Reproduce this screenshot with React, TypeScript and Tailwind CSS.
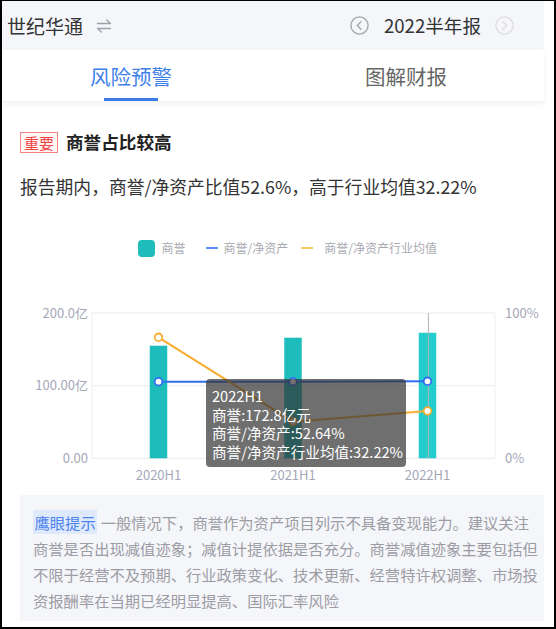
import React from "react";

const F = "font-['Noto_Sans_CJK_SC','Noto_Sans',sans-serif]";

function SwapIcon() {
  return (
    <svg width="16" height="16" viewBox="0 0 16 16" fill="none" stroke="#a0a0a8" strokeWidth="1.3" strokeLinecap="round" strokeLinejoin="round">
      <path d="M1.5 5.5 H14.5 L10.5 2" />
      <path d="M14.5 10.5 H1.5 L5.5 14" />
    </svg>
  );
}

function CircleChevron({ dir, color }: { dir: "left" | "right"; color: string }) {
  return (
    <svg width="19" height="19" viewBox="0 0 19 19" fill="none" stroke={color} strokeWidth="1.3" strokeLinecap="round" strokeLinejoin="round">
      <circle cx="9.5" cy="9.5" r="8.6" />
      {dir === "left" ? <path d="M11 5.8 L7.3 9.5 L11 13.2" /> : <path d="M8 5.8 L11.7 9.5 L8 13.2" />}
    </svg>
  );
}

function Chart() {
  const y0 = 168.3;
  const yTop = 23;
  const h = y0 - yTop;
  const bars = [
    { x: 156.5, v: 155, c: "#1fbcbc" },
    { x: 291, v: 166, c: "#1fbcbc" },
    { x: 425.5, v: 172.8, c: "#25cccc" },
  ];
  const by = (v: number) => y0 - (v / 200) * h;
  const blue = [
    [156.5, 91.7],
    [291, 91.7],
    [425.5, 91.3],
  ];
  const orange = [
    [156.5, 47.3],
    [291, 131.7],
    [425.5, 121],
  ];
  const axis = "#a4a7b8";
  return (
    <div className="relative h-[200px] w-[542px]">
      <svg width="542" height="200" viewBox="0 0 542 200" className="block">
        {[yTop, 95.7, y0].map((y) => (
          <line key={y} x1="90" x2="493" y1={y} y2={y} stroke="#e9eaef" strokeWidth="1" />
        ))}
        <line x1="90" x2="90" y1={yTop} y2={y0} stroke="#eeeff3" strokeWidth="1" />
        <line x1="493" x2="493" y1={yTop} y2={y0} stroke="#eeeff3" strokeWidth="1" />
        <g fill={axis} fontSize="13" textAnchor="end" fontFamily="'Noto Sans CJK SC','Noto Sans',sans-serif">
          <text x="86" y={yTop + 4.5}>200.0亿</text>
          <text x="86" y={95.7 + 4.5}>100.00亿</text>
          <text x="86" y={y0 + 4.5}>0.00</text>
        </g>
        <g fill={axis} fontSize="13" fontFamily="'Noto Sans CJK SC','Noto Sans',sans-serif">
          <text x="503" y={yTop + 4.5}>100%</text>
          <text x="503" y={y0 + 4.5}>0%</text>
        </g>
        <g fill={axis} fontSize="13" textAnchor="middle" fontFamily="'Noto Sans CJK SC','Noto Sans',sans-serif">
          <text x="156.5" y="189.5">2020H1</text>
          <text x="291" y="189.5">2021H1</text>
          <text x="425.5" y="189.5">2022H1</text>
        </g>
        {bars.map((b) => (
          <rect key={b.x} x={b.x - 8.75} y={by(b.v)} width="17.5" height={y0 - by(b.v)} fill={b.c} />
        ))}
        <line x1="426.4" x2="426.4" y1={yTop} y2={y0} stroke="#b4b4b8" strokeWidth="1" />
        <polyline points={blue.map((p) => p.join(",")).join(" ")} fill="none" stroke="#2f6ff0" strokeWidth="2" />
        <polyline points={orange.map((p) => p.join(",")).join(" ")} fill="none" stroke="#f8ac30" strokeWidth="2" />
        {blue.map((p) => (
          <circle key={"b" + p[0]} cx={p[0]} cy={p[1]} r="3.8" fill="#fff" stroke="#2f6ff0" strokeWidth="1.8" />
        ))}
        {orange.map((p) => (
          <circle key={"o" + p[0]} cx={p[0]} cy={p[1]} r="3.8" fill="#fff" stroke="#f8ac30" strokeWidth="1.8" />
        ))}
      </svg>
      <div className={`absolute left-[204px] top-[89px] w-[200px] h-[88px] rounded-[4px] bg-[rgba(50,50,50,0.7)] pl-[6px] pt-[8px] text-[14.6px] leading-[18.5px] text-white whitespace-nowrap ${F}`}>
        <div>2022H1</div>
        <div>商誉:172.8亿元</div>
        <div>商誉/净资产:52.64%</div>
        <div>商誉/净资产行业均值:32.22%</div>
      </div>
    </div>
  );
}

export default function App() {
  return (
    <div className={`w-[556px] h-[629px] bg-black pt-px pl-[2px] pr-[2px] pb-[2px] ${F}`}>
      <div className="h-full w-full bg-white overflow-hidden">
        <div className="w-[542px]">
          {/* header */}
          <div className="h-[49px] bg-[#f5f6fa] flex items-center pl-[5px] pr-[30px]">
            <span className="text-[19px] text-[#333] leading-none">世纪华通</span>
            <span className="ml-[13px] mt-[1px]">
              <SwapIcon />
            </span>
            <div className="ml-auto flex items-center">
              <CircleChevron dir="left" color="#a3a3ab" />
              <span className="ml-[15px] text-[18.6px] text-[#333] leading-none">2022半年报</span>
              <span className="ml-[14px]">
                <CircleChevron dir="right" color="#dcdce0" />
              </span>
            </div>
          </div>
          {/* tabs */}
          <div className="relative h-[51px] bg-white flex shadow-[0_3px_6px_rgba(0,0,0,0.06)]">
            <div className="relative w-[258px] flex items-center justify-center">
              <span className="text-[20.5px] text-[#3f7fe9] leading-none mt-[1px]">风险预警</span>
              <div className="absolute bottom-0 left-1/2 -translate-x-1/2 w-[54px] h-[3px] bg-[#3b7be8]" />
            </div>
            <div className="ml-[11px] w-[270px] flex items-center justify-center">
              <span className="text-[20.5px] text-[#666] leading-none mt-[1px]">图解财报</span>
            </div>
          </div>
          {/* card */}
          <div className="pl-[18px] pt-[30px]">
            <div className="flex items-center h-[22px]">
              <span className="h-[21px] w-[38px] border border-[#f38383] bg-[#fff6f6] text-[#f04545] text-[15px] leading-[19px] flex items-center justify-center">
                重要
              </span>
              <span className="ml-[8px] text-[17.6px] font-bold text-[#222]">商誉占比较高</span>
            </div>
            <div className="mt-[20px] h-[26px] text-[17.8px] leading-[26px] text-[#333] whitespace-nowrap">
              报告期内，商誉/净资产比值52.6%，高于行业均值32.22%
            </div>
          </div>
          {/* legend */}
          <div className="mt-[40px] h-[18px] flex items-center pl-[135.6px] text-[12px] text-[#a9aab2] leading-none whitespace-nowrap">
            <span className="w-[17px] h-[17px] rounded-[4px] bg-[#1fbcbc]" />
            <span className="ml-[7px]">商誉</span>
            <span className="ml-[20px] w-[12px] h-[2px] bg-[#5b8ff5]" />
            <span className="ml-[6px]">商誉/净资产</span>
            <span className="ml-[13px] w-[12px] h-[2px] bg-[#fbc66a]" />
            <span className="ml-[11px]">商誉/净资产行业均值</span>
          </div>
          {/* chart */}
          <div className="mt-[33px]">
            <Chart />
          </div>
          {/* tip */}
          <div className="ml-[18px] mt-[5px] h-[126px] bg-[#f5f6fa] pl-[13px] pt-[14px] pb-[8px] text-[15.3px] leading-[26px] text-[#9c9ca4] whitespace-nowrap">
            <span className="inline-block h-[24px] leading-[24px] bg-[#dfe9fc] text-[#4c82ec] px-[1.5px]">鹰眼提示</span>{" "}
            一般情况下，商誉作为资产项目列示不具备变现能力。建议关注
            <br />
            商誉是否出现减值迹象；减值计提依据是否充分。商誉减值迹象主要包括但
            <br />
            不限于经营不及预期、行业政策变化、技术更新、经营特许权调整、市场投
            <br />
            资报酬率在当期已经明显提高、国际汇率风险
          </div>
        </div>
      </div>
    </div>
  );
}
